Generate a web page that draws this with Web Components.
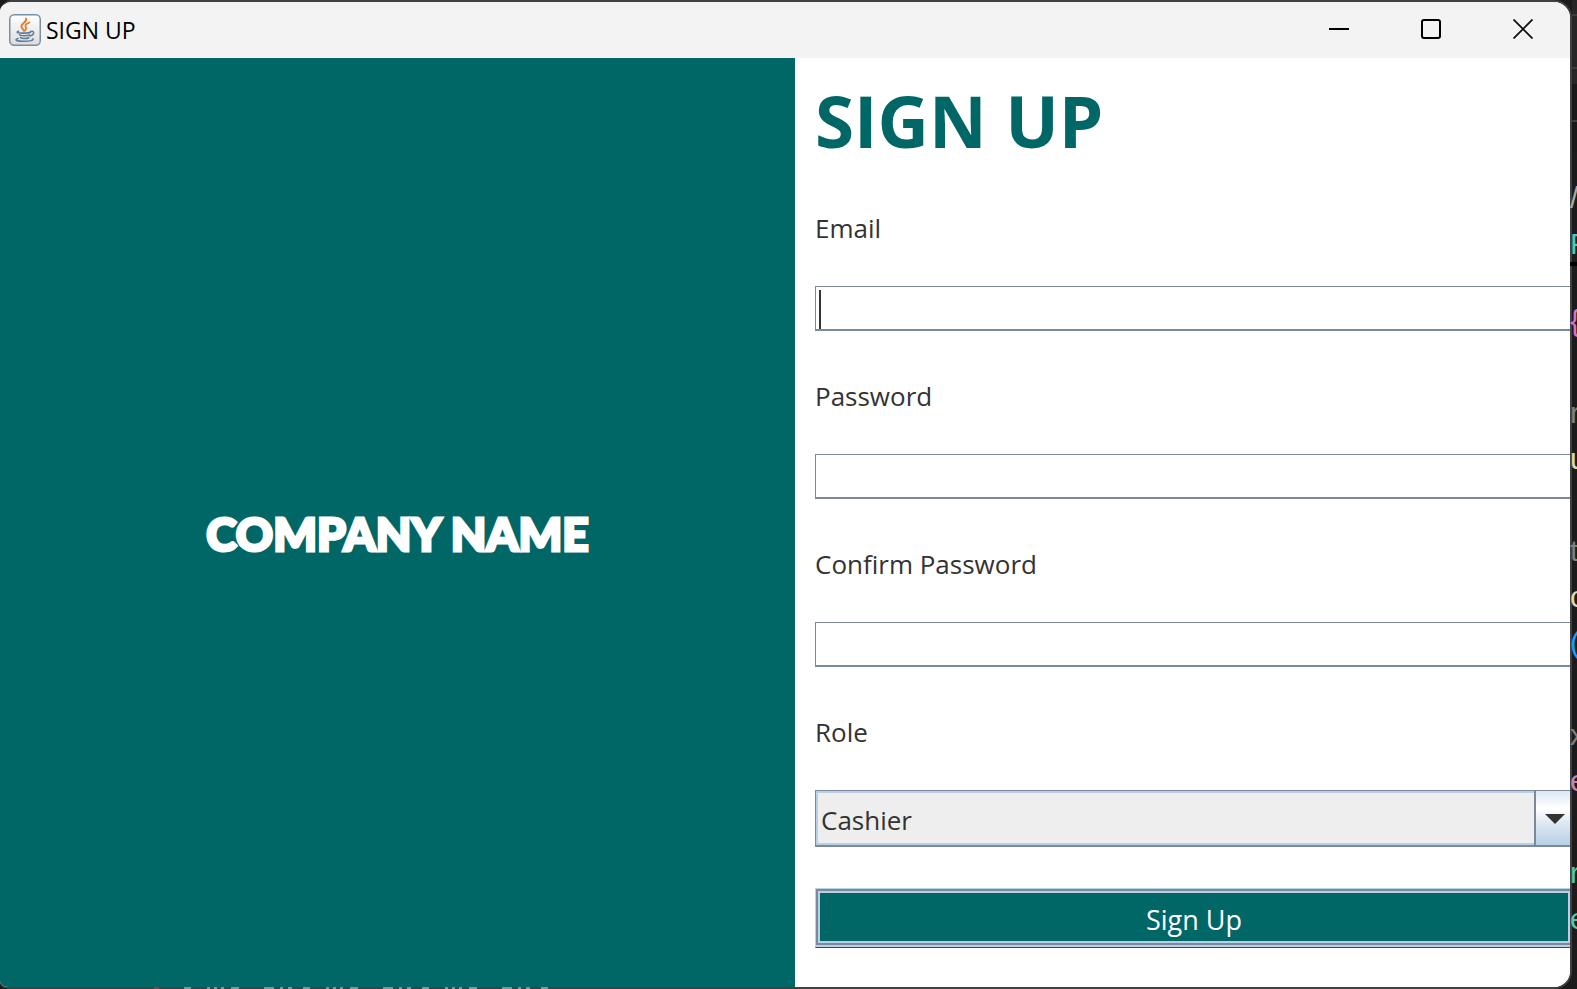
<!DOCTYPE html>
<html lang="en">
<head>
<meta charset="utf-8">
<title>SIGN UP</title>
<style>
  html, body { margin: 0; background: #1b1b1b; }
  body {
    --teal: #006666; --line: #7a8a99; --light: #b8cfe5; --ink: #333333;
    min-height: 100vh; position: relative; overflow-x: hidden;
    display: flex; flex-direction: column;
    font-family: "Open Sans", "Noto Sans", sans-serif;
  }
  app-window { flex: 1; margin-right: 5px; }
</style>
</head>
<body>
<app-window>
  <title-bar slot="bar">SIGN UP</title-bar>
  <brand-panel>COMPANY NAME</brand-panel>
  <signup-form></signup-form>
</app-window>
<editor-edge></editor-edge>
<editor-peek></editor-peek>

<script>
const define = (name, html, setup) => {
  const template = document.createElement('template');
  template.innerHTML = html;
  customElements.define(name, class extends HTMLElement {
    connectedCallback() {
      if (this.shadowRoot) return;
      this.attachShadow({ mode: 'open' }).append(template.content.cloneNode(true));
      if (setup) setup(this, this.shadowRoot);
    }
  });
};

define('app-window', `
<style>
  :host { display: flex; flex-direction: column; box-sizing: border-box; position: relative;
    border: solid #404040; border-width: 2px 2px 2px 0; border-radius: 12px 18px 18px 8px;
    overflow: hidden; background: #fff; }
  main { flex: 1; display: grid; grid-template-columns: 795fr 775fr; }
</style>
<slot name="bar"></slot>
<main><slot></slot></main>`);

define('title-bar', `
<style>
  :host { display: flex; align-items: center; height: 56px; padding: 0 1px 0 9px; background: #f3f3f3; color: #000; }
  .icon { width: 32px; height: 32px; margin-right: 5px; }
  span { flex: 1; font-size: 23px; line-height: 32px; }
  button { align-self: flex-start; width: 92px; height: 54px; padding: 0; border: 0; background: none; display: grid; place-items: center; }
</style>
<svg class="icon" viewBox="0 0 32 32" aria-hidden="true">
  <defs><linearGradient id="g" x2="0" y2="1"><stop offset="0" stop-color="#fff"/><stop offset="1" stop-color="#dcdcdc"/></linearGradient></defs>
  <rect x=".75" y=".75" width="30.5" height="30.5" rx="4.5" fill="url(#g)" stroke="#7890a4" stroke-width="1.5"/>
  <g fill="none" stroke-linecap="round">
    <path d="M17 4.5c1.5 4-5.500 5-4.500 8.500.4 1.500 2 2.300 2.500 4" stroke="#ee7a22" stroke-width="1.900"/>
    <path d="M20.500 8.500c-3 1.200-5 2.500-3.800 4.500.8 1.400.7 2.300-.7 3.500" stroke="#ee7a22" stroke-width="1.700"/>
    <path d="M9.500 17.300c-3 1.200-.5 1.800 5 1.800 4 0 6-.3 7-.8M10.500 20.800c.5 1.200 8 1.200 10 .2M11.500 23.500c1 1.300 6.500 1.200 8.200.2" stroke="#5c7d9b" stroke-width="1.600"/>
    <path d="M21.500 17.500c4-1.500 4.500 3-.5 4.500" stroke="#5c7d9b" stroke-width="1.500"/>
    <path d="M9 24.500c-4.500 1.500-1 2.800 6.500 2.800 5.500 0 9-1 8.500-2.500" stroke="#5c7d9b" stroke-width="1.500"/>
  </g>
</svg>
<span><slot></slot></span>
<button aria-label="Minimize"><svg width="20" height="20"><path d="M0 10h20" stroke="#000" stroke-width="2"/></svg></button>
<button aria-label="Maximize"><svg width="20" height="20"><rect x="1" y="1" width="18" height="18" rx="2" fill="none" stroke="#000" stroke-width="2"/></svg></button>
<button aria-label="Close"><svg width="20" height="20"><path d="M.5.5l19 19M19.500.5l-19 19" stroke="#111" stroke-width="1.800"/></svg></button>`);

define('brand-panel', `
<style>
  :host { display: grid; place-items: center; background: var(--teal); color: #fff; }
  p { margin: 22px 0 0; font: 900 46px/60px Lato, sans-serif; -webkit-text-stroke: 3px #fff; white-space: nowrap; }
</style>
<p><slot></slot></p>`);

const fieldStyle = `
  :host { display: block; }
  label { display: block; margin-bottom: 39px; font-size: 26px; line-height: 38px; color: var(--ink); }`;

define('text-field', `
<style>${fieldStyle}
  :host { margin-bottom: 46px; }
  .box { position: relative; }
  input { display: block; box-sizing: border-box; width: 100%; height: 45px; padding: 0 4px; margin: 0;
    border: solid var(--line); border-width: 1px 2px 2px 1px; border-radius: 0; outline: 0;
    background: #fff; font: inherit; font-size: 26px; color: var(--ink); }
  .caret { display: none; position: absolute; left: 4px; top: 4px; bottom: 2px; width: 2px; background: var(--ink); }
  :host([active]) .caret { display: block; }
</style>
<label for="f"><slot></slot></label>
<div class="box"><input id="f"><i class="caret"></i></div>`,
(host, root) => { root.querySelector('input').type = host.getAttribute('type') || 'text'; });

define('role-field', `
<style>${fieldStyle}
  :host { margin-bottom: 41px; }
  .box { display: grid; }
  .box > * { grid-area: 1 / 1; }
  select { appearance: none; box-sizing: border-box; width: 100%; height: 57px; margin: 0; padding: 3px 48px 0 5px;
    border: solid var(--line); border-width: 1px 1px 2px 1px; border-radius: 0; outline: 0;
    background: #eee; box-shadow: inset 0 0 0 2px var(--light); font: inherit; font-size: 26px; color: var(--ink); }
  .arrow { justify-self: end; box-sizing: border-box; width: 41px; border: solid var(--line); border-width: 1px 1px 2px 2px;
    padding: 2px 0 0 9px; display: flex; align-items: center; pointer-events: none;
    background: linear-gradient(#dde8f3, #fff 32%, #dde8f3 60%, var(--light)); }
</style>
<label for="f"><slot></slot></label>
<div class="box">
  <select id="f"><option>Cashier</option></select>
  <span class="arrow"><svg width="20" height="10" aria-hidden="true"><path d="M0 0h20L10 10z" fill="#333"/></svg></span>
</div>`);

define('signup-form', `
<style>
  :host { display: block; min-width: 0; background: #fff; }
  form { display: flex; flex-direction: column; margin-right: -5px; padding: 15px 0 39px 20px; }
  h1 { margin: 0 0 40px; font-size: 71px; line-height: 96px; font-weight: 700; color: var(--teal); }
  button { box-sizing: border-box; height: 60px; margin: 0 2px 0 0; padding: 4px 0 0;
    border: 1px solid var(--light); border-bottom: 1px solid var(--teal); border-radius: 0;
    background: var(--teal); color: #fff; font: inherit; font-size: 27px; line-height: 38px;
    box-shadow: inset 0 -2px var(--light), inset 0 2px var(--line), inset 2px 0 var(--line), inset -2px 0 var(--line),
      inset 0 -4px var(--line), inset 0 0 0 4px var(--light), inset 0 -6px var(--light); }
</style>
<form onsubmit="return false">
  <h1>SIGN UP</h1>
  <text-field type="email" active>Email</text-field>
  <text-field type="password">Password</text-field>
  <text-field type="password">Confirm Password</text-field>
  <role-field>Role</role-field>
  <button>Sign Up</button>
</form>`);

/* sliver of the code editor that shows past the window's right side */
define('editor-edge', `
<style>
  :host { position: absolute; top: 0; right: 0; bottom: 0; width: 7px; overflow: hidden; pointer-events: none;
    display: flex; flex-direction: column;
    font: 30px/46px "Liberation Sans", sans-serif;
    background: linear-gradient(90deg, #404040 2px, transparent 2px) 0 20px / 100% calc(100% - 38px) no-repeat; }
  .tabs { height: 152px; flex: none; margin-left: 2px;
    background: linear-gradient(#3c3c3c 2px, transparent 2px) 0 14px / 100% 53px, linear-gradient(#262626 84px, #181818 84px); background-size: 100% 53px, auto; }
  .head { height: 114px; flex: none; padding-top: 23px; box-sizing: border-box; border-bottom: 4px solid #000; }
  .code { flex: none; margin-top: 32px; display: grid; grid-auto-rows: 46px; }
  b { display: block; height: 46px; font-weight: 400; white-space: pre; }
</style>
<div class="tabs"></div>
<div class="head"><b style="color:#aaa">/</b><b style="color:#4ec9b0">P</b></div>
<div class="code"></div>`,
(host, root) => {
  const rows = [['{', '#da70d6'], null, ['r', '#808080'], ['u', '#dcdcaa'], null, ['t', '#808080'], ['c', '#dcdcaa'],
    ['(', '#179fff'], null, ['x', '#808080'], ['e', '#c586c0'], null, ['r', '#4ec9b0'], ['e', '#4ec9b0']];
  for (const row of rows) {
    const line = document.createElement('b');
    if (row) { line.textContent = row[0]; line.style.color = row[1]; }
    root.querySelector('.code').append(line);
  }
});

/* specks of the editor's last line under the window's lower border */
define('editor-peek', `
<style>
  :host { position: absolute; left: 154px; bottom: 0; width: 398px; height: 2px; pointer-events: none; }
  svg { display: block; }
</style>
<svg width="398" height="2" aria-hidden="true">
  <path d="M0 1h5" stroke="#8a4040" stroke-width="2"/>
  <path d="M30 1h368" stroke="#8f8f8f" stroke-width="2" stroke-dasharray="7 16 3 4 3 4 3 7 8 25 10 6 3 5 4 11"/>
</svg>`);
</script>
</body>
</html>
